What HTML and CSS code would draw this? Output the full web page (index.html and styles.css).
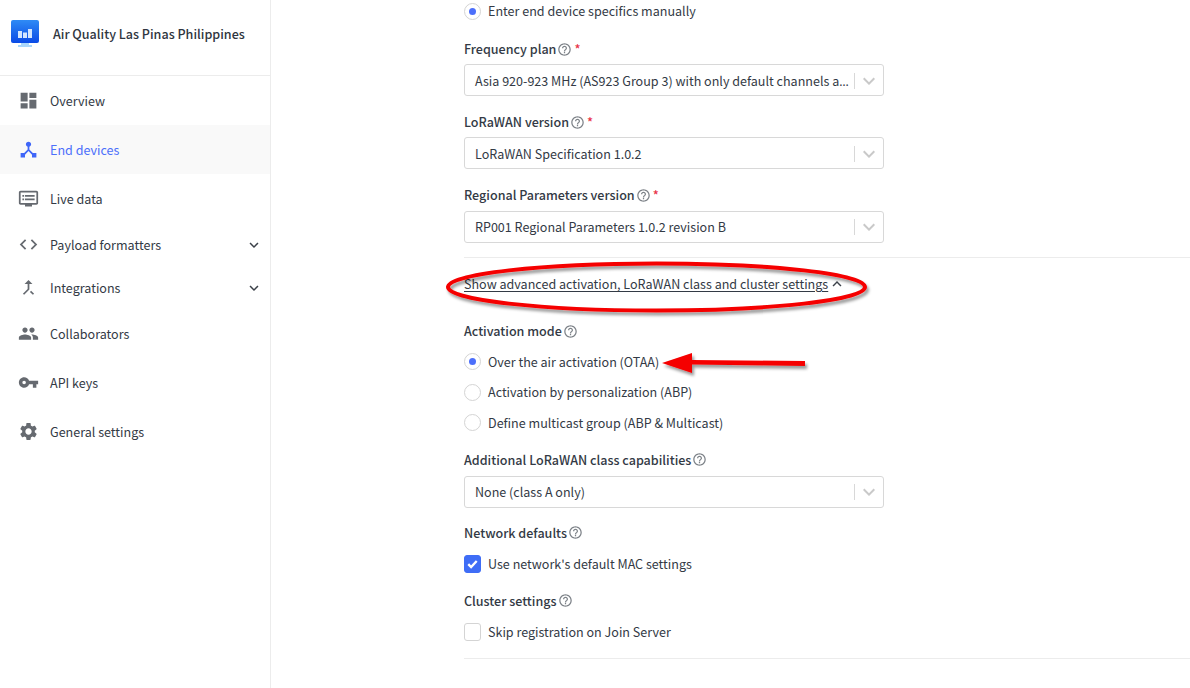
FILE: index.html
```html
<!DOCTYPE html>
<html lang="en">
<head>
<meta charset="utf-8">
<title>Air Quality Las Pinas Philippines</title>
<link rel="stylesheet" href="styles.css">
</head>
<body>
<svg class="sprite" width="0" height="0" aria-hidden="true">
  <symbol id="i-dashboard" viewBox="0 0 24 24"><path d="M3 13h8V3H3v10zm0 8h8v-6H3v6zm10 0h8V11h-8v10zm0-18v6h8V3h-8z"/></symbol>
  <symbol id="i-hub" viewBox="0 0 24 24"><path d="M17 16l-4-4V8.82C14.16 8.4 15 7.3 15 6c0-1.66-1.34-3-3-3S9 4.34 9 6c0 1.3.84 2.4 2 2.82V12l-4 4H3v5h5v-3.05l4-4.2 4 4.2V21h5v-5h-4z"/></symbol>
  <symbol id="i-dvr" viewBox="0 0 24 24"><path d="M21 3H3c-1.1 0-2 .9-2 2v12c0 1.1.9 2 2 2h5v2h8v-2h5c1.1 0 1.99-.9 1.99-2L23 5c0-1.1-.9-2-2-2zm0 14H3V5h18v12zm-2-9H8v2h11V8zm0 4H8v2h11v-2zM7 8H5v2h2V8zm0 4H5v2h2v-2z"/></symbol>
  <symbol id="i-code" viewBox="0 0 24 24"><path d="M9.4 16.6L4.8 12l4.6-4.6L8 6l-6 6 6 6 1.4-1.4zm5.2 0l4.6-4.6-4.6-4.6L16 6l6 6-6 6-1.4-1.4z"/></symbol>
  <symbol id="i-merge" viewBox="0 0 24 24"><path d="M17 20.41L18.41 19 15 15.59 13.59 17 17 20.41zM7.5 8H11v5.59L5.59 19 7 20.41l6-6V8h3.5L12 3.5 7.5 8z"/></symbol>
  <symbol id="i-people" viewBox="0 0 24 24"><path d="M16 11c1.66 0 2.99-1.34 2.99-3S17.66 5 16 5c-1.66 0-3 1.34-3 3s1.34 3 3 3zm-8 0c1.66 0 2.99-1.34 2.99-3S9.66 5 8 5C6.34 5 5 6.34 5 8s1.34 3 3 3zm0 2c-2.33 0-7 1.17-7 3.5V19h14v-2.5c0-2.33-4.67-3.5-7-3.5zm8 0c-.29 0-.62.02-.97.05 1.16.84 1.97 1.97 1.97 3.45V19h6v-2.5c0-2.33-4.67-3.5-7-3.5z"/></symbol>
  <symbol id="i-key" viewBox="0 0 24 24"><path d="M12.65 10C11.83 7.67 9.61 6 7 6c-3.31 0-6 2.69-6 6s2.69 6 6 6c2.61 0 4.83-1.67 5.65-4H17v4h4v-4h2v-4H12.65zM7 14c-1.1 0-2-.9-2-2s.9-2 2-2 2 .9 2 2-.9 2-2 2z"/></symbol>
  <symbol id="i-gear" viewBox="0 0 24 24"><path d="M19.14 12.94c.04-.3.06-.61.06-.94 0-.32-.02-.64-.07-.94l2.03-1.58c.18-.14.23-.41.12-.61l-1.92-3.32c-.12-.22-.37-.29-.59-.22l-2.39.96c-.5-.38-1.03-.7-1.62-.94l-.36-2.54c-.04-.24-.24-.41-.48-.41h-3.84c-.24 0-.43.17-.47.41l-.36 2.54c-.59.24-1.13.57-1.62.94l-2.39-.96c-.22-.08-.47 0-.59.22L2.74 8.87c-.12.21-.08.47.12.61l2.03 1.58c-.05.3-.09.63-.09.94s.02.64.07.94l-2.03 1.58c-.18.14-.23.41-.12.61l1.92 3.32c.12.22.37.29.59.22l2.39-.96c.5.38 1.03.7 1.62.94l.36 2.54c.05.24.24.41.48.41h3.84c.24 0 .44-.17.47-.41l.36-2.54c.59-.24 1.13-.56 1.62-.94l2.39.96c.22.08.47 0 .59-.22l1.92-3.32c.12-.22.07-.47-.12-.61l-2.01-1.58zM12 15.6c-1.98 0-3.6-1.62-3.6-3.6s1.62-3.6 3.6-3.6 3.6 1.62 3.6 3.6-1.62 3.6-3.6 3.6z"/></symbol>
  <symbol id="i-help" viewBox="0 0 24 24"><path d="M11 18h2v-2h-2v2zm1-16C6.48 2 2 6.48 2 12s4.48 10 10 10 10-4.48 10-10S17.52 2 12 2zm0 18c-4.41 0-8-3.59-8-8s3.59-8 8-8 8 3.59 8 8-3.59 8-8 8zm0-14c-2.21 0-4 1.79-4 4h2c0-1.1.9-2 2-2s2 .9 2 2c0 2-3 1.75-3 5h2c0-2.25 3-2.500 3-5 0-2.21-1.79-4-4-4z"/></symbol>
  <symbol id="i-down" viewBox="0 0 24 24"><path d="M7.41 8.59L12 13.17l4.59-4.58L18 10l-6 6-6-6z"/></symbol>
  <symbol id="i-up" viewBox="0 0 24 24"><path d="M7.41 15.41L12 10.83l4.59 4.58L18 14l-6-6-6 6z"/></symbol>
</svg>

<div class="app">
  <aside class="sidebar">
    <header class="brand">
      <svg class="brand-logo" viewBox="0 0 28 27" aria-hidden="true">
        <defs>
          <linearGradient id="screen" x1="0" y1="0" x2="0" y2="1">
            <stop offset="0" stop-color="#2f8bf5"/>
            <stop offset="1" stop-color="#0a4ae6"/>
          </linearGradient>
        </defs>
        <path d="M10 22h8v3h3v2H7v-2h3z" fill="#a9d6fb"/>
        <rect x="0" y="0" width="28" height="23" rx="2" fill="url(#screen)"/>
        <path d="M7 11h4v7H7zM12 12.500h4V18h-4zM17 9h4v9h-4z" fill="#d3e6ff"/>
      </svg>
      <span class="brand-name">Air Quality Las Pinas Philippines</span>
    </header>
    <nav class="nav">
      <a class="nav-item"><svg class="nav-icon"><use href="#i-dashboard"/></svg>Overview</a>
      <a class="nav-item nav-item--active"><svg class="nav-icon"><use href="#i-hub"/></svg>End devices</a>
      <a class="nav-item"><svg class="nav-icon"><use href="#i-dvr"/></svg>Live data</a>
      <a class="nav-item nav-item--group"><svg class="nav-icon"><use href="#i-code"/></svg>Payload formatters<svg class="nav-caret"><use href="#i-down"/></svg></a>
      <a class="nav-item nav-item--group"><svg class="nav-icon"><use href="#i-merge"/></svg>Integrations<svg class="nav-caret"><use href="#i-down"/></svg></a>
      <a class="nav-item"><svg class="nav-icon"><use href="#i-people"/></svg>Collaborators</a>
      <a class="nav-item"><svg class="nav-icon"><use href="#i-key"/></svg>API keys</a>
      <a class="nav-item"><svg class="nav-icon"><use href="#i-gear"/></svg>General settings</a>
    </nav>
  </aside>

  <main class="main">
    <form class="form">
      <label class="option option--first"><span class="radio radio--on"></span>Enter end device specifics manually</label>

      <div class="field">
        <div class="label">Frequency plan<svg class="help"><use href="#i-help"/></svg><span class="req">*</span></div>
        <div class="select"><span class="select-value">Asia 920-923 MHz (AS923 Group 3) with only default channels a<span class="ellipsis">…</span></span><span class="select-sep"></span><svg class="select-caret"><use href="#i-down"/></svg></div>
      </div>
      <div class="field">
        <div class="label">LoRaWAN version<svg class="help"><use href="#i-help"/></svg><span class="req">*</span></div>
        <div class="select"><span class="select-value">LoRaWAN Specification 1.0.2</span><span class="select-sep"></span><svg class="select-caret"><use href="#i-down"/></svg></div>
      </div>
      <div class="field">
        <div class="label">Regional Parameters version<svg class="help"><use href="#i-help"/></svg><span class="req">*</span></div>
        <div class="select select--low"><span class="select-value">RP001 Regional Parameters 1.0.2 revision B</span><span class="select-sep"></span><svg class="select-caret"><use href="#i-down"/></svg></div>
      </div>

      <hr class="rule rule--top">

      <div class="toggle"><span class="toggle-text">Show advanced activation, LoRaWAN class and cluster settings</span><svg class="toggle-caret"><use href="#i-up"/></svg></div>

      <div class="label label--section">Activation mode<svg class="help"><use href="#i-help"/></svg></div>
      <div class="options">
        <label class="option"><span class="radio radio--on"></span>Over the air activation (OTAA)</label>
        <label class="option"><span class="radio"></span>Activation by personalization (ABP)</label>
        <label class="option"><span class="radio"></span>Define multicast group (ABP &amp; Multicast)</label>
      </div>

      <div class="field field--class">
        <div class="label">Additional LoRaWAN class capabilities<svg class="help"><use href="#i-help"/></svg></div>
        <div class="select select--low"><span class="select-value">None (class A only)</span><span class="select-sep"></span><svg class="select-caret"><use href="#i-down"/></svg></div>
      </div>

      <div class="label label--network">Network defaults<svg class="help"><use href="#i-help"/></svg></div>
      <label class="option option--check"><span class="check check--on"><svg viewBox="0 0 16 16" class="check-mark"><path d="M3.500 8.200l3 3 6-6.400"/></svg></span>Use network's default MAC settings</label>

      <div class="label label--cluster">Cluster settings<svg class="help"><use href="#i-help"/></svg></div>
      <label class="option option--check"><span class="check"></span>Skip registration on Join Server</label>

      <hr class="rule rule--bottom">
    </form>
  </main>
</div>

<svg class="annotations" viewBox="0 0 1190 688" aria-hidden="true">
  <defs>
    <filter id="drop" x="-10%" y="-30%" width="120%" height="170%">
      <feDropShadow dx="2" dy="3" stdDeviation="1.500" flood-color="#000" flood-opacity=".4"/>
    </filter>
  </defs>
  <g filter="url(#drop)">
    <ellipse cx="656.500" cy="287" rx="208.500" ry="23.500" fill="none" stroke="#f50000" stroke-width="4"/>
    <path d="M662 363L692 353 692 360 805 361 805 366 692 364.500 692 373z" fill="#f50000"/>
  </g>
</svg>
</body>
</html>
```
FILE: styles.css
```css
* { box-sizing: border-box; }
html, body { margin: 0; height: 100%; overflow: hidden; background: #fff; }
body {
  font-family: "Noto Sans CJK SC", "Noto Sans", sans-serif;
  font-size: 12.550px;
  line-height: 20px;
  color: #333a45;
}
.sprite { position: absolute; }
.app { display: flex; height: 688px; }

.sidebar { width: 271px; flex: none; border-right: 1px solid #ececec; }
.brand {
  height: 76px;
  display: flex;
  align-items: flex-start;
  border-bottom: 1px solid #ececec;
  padding: 20px 0 0 11px;
}
.brand-logo { width: 28px; height: 27px; flex: none; }
.brand-name { margin: 4px 0 0 14px; font-weight: 500; color: #2f3640; white-space: nowrap; }

.nav-item {
  height: 49px;
  display: flex;
  align-items: center;
  padding: 0 7px 0 18px;
  color: #333a45;
}
.nav-item--group { height: 43px; }
.nav-item--active { background: #f9f9f9; color: #4c6ffb; }
.nav-icon { width: 21px; height: 21px; flex: none; margin-right: 11px; fill: #666a70; }
.nav-item--active .nav-icon { fill: #3f66f8; }
.nav-caret { width: 18px; height: 18px; margin-left: auto; fill: #3b4149; }

.main { flex: 1; min-width: 0; }
.form { margin-left: 193px; }

.option { display: flex; align-items: center; height: 30.500px; color: #333a45; }
.option--first { height: 22px; }
.option--check { height: 22px; }

.radio {
  width: 17px; height: 17px; flex: none; margin-right: 7px;
  border: 1px solid #d4d4d4; border-radius: 50%; background: #fff;
  display: flex; align-items: center; justify-content: center;
}
.radio--on::after { content: ""; width: 7px; height: 7px; border-radius: 50%; background: #4c6ffb; }

.check {
  width: 17px; height: 18px; flex: none; margin-right: 7px;
  border: 1px solid #d4d4d4; border-radius: 3px; background: #fff;
}
.check--on { background: #3f6df6; border-color: #3f6df6; }
.check-mark { display: block; width: 15px; height: 16px; fill: none; stroke: #fff; stroke-width: 2.500; }

.field { margin-top: 17px; }
.field + .field { margin-top: 16px; }
.label { display: flex; align-items: center; height: 20px; font-weight: 500; color: #333a45; white-space: nowrap; }
.help { width: 15px; height: 15px; margin-left: 1px; fill: #7d8288; flex: none; }
.req { color: #e8354a; margin-left: 2px; }

.select {
  width: 420px; height: 32px; margin-top: 5px;
  display: flex; align-items: center;
  padding: 2px 2px 0 10px;
  border: 1px solid #d8d8d8; border-radius: 3px; background: #fff;
}
.select--low { margin-top: 6px; padding-top: 0; }
.select-value { flex: 1; min-width: 0; white-space: nowrap; }
.ellipsis { font-family: "Noto Sans", sans-serif; font-size: 12px; }
.select-sep { width: 1px; height: 16px; background: #d8d8d8; flex: none; }
.select-caret { width: 24px; height: 24px; margin-left: 2px; flex: none; fill: #c9c9c9; }

.rule { border: 0; height: 1px; background: #ececec; margin: 0; }
.rule--top { margin-top: 14px; }
.rule--bottom { margin-top: 15px; }

.toggle { display: flex; align-items: center; height: 20px; margin-top: 16px; }
.toggle-text { text-decoration: underline; text-underline-offset: 2px; }
.toggle-caret { width: 18px; height: 18px; fill: #3b4149; }

.label--section { margin-top: 27px; }
.options { margin-top: 5.500px; }
.field--class { margin-top: 11.500px; }
.label--network { margin-top: 15px; }
.label--network + .option--check { margin-top: 10px; }
.label--cluster { margin-top: 16px; }
.label--cluster + .option--check { margin-top: 10px; }

.annotations { position: absolute; left: 0; top: 0; width: 1190px; height: 688px; pointer-events: none; }
```
